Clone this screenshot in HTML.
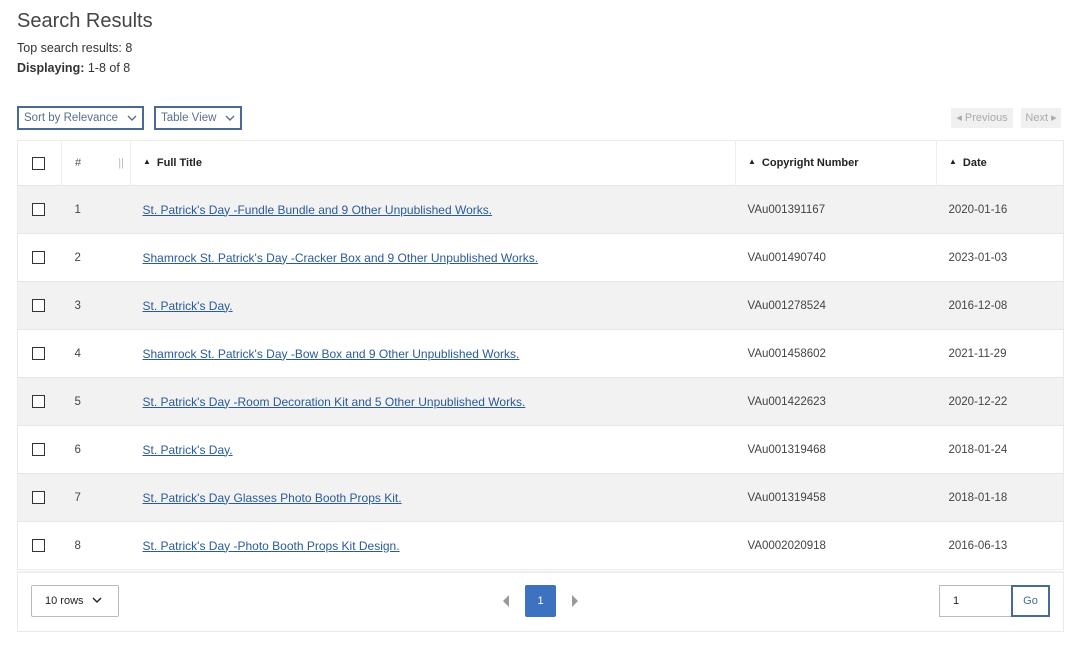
<!DOCTYPE html>
<html><head><meta charset="utf-8"><style>
*{box-sizing:border-box;margin:0;padding:0}
body{width:1080px;height:648px;background:#fff;font-family:"Liberation Sans",sans-serif;color:#333;position:relative;overflow:hidden}
.abs{position:absolute}
h1{position:absolute;left:17px;top:10px;font-size:20px;font-weight:normal;color:#444}
.sel{position:absolute;top:106px;height:24px;border:2px solid #4a6a96;font-size:11.5px;color:#5a6f8c;padding:4px 5px;}
.sel svg{position:absolute;right:5px;top:7px}
table{position:absolute;left:17px;top:140px;width:1047px;border-collapse:collapse;font-size:11.5px;border:1px solid #eaeaea}
td,th{height:48px;padding:0;vertical-align:middle;text-align:left}
th{height:45px;font-weight:bold;font-size:11px;color:#222;border-right:1px solid #eee;background:#fff}
tbody tr:nth-child(odd) td{background:#f2f2f2}
tbody tr:nth-child(even) td{background:#fff}
tbody td{border-top:1px solid #e6e6e6;color:#444}
.cb{display:inline-block;width:13px;height:13px;border:1.5px solid #333;background:#fff;margin-left:14px;vertical-align:middle}
a{color:#2a5a9a;text-decoration:underline;font-size:12px}
.tri{font-size:8px;margin-right:6px;position:relative;top:-2px}
</style></head><body>
<h1>Search Results</h1>
<div class="abs" style="left:17px;top:41px;font-size:12.5px;color:#333">Top search results: 8</div>
<div class="abs" style="left:17px;top:61px;font-size:12.5px;color:#333"><b>Displaying:</b> 1-8 of 8</div>
<div class="sel" style="left:17px;width:127px">Sort by Relevance<svg width="10" height="7"><path d="M1 1l4 4 4-4" stroke="#5a6f8c" stroke-width="1.4" fill="none"/></svg></div>
<div class="sel" style="left:154px;width:88px">Table View<svg width="10" height="7"><path d="M1 1l4 4 4-4" stroke="#5a6f8c" stroke-width="1.4" fill="none"/></svg></div>
<div class="abs" style="left:951px;top:108px;width:62px;height:20px;background:#f0f0f0;color:#aaa;font-size:11px;line-height:20px;text-align:center">◂ Previous</div>
<div class="abs" style="left:1021px;top:108px;width:40px;height:20px;background:#f0f0f0;color:#aaa;font-size:11px;line-height:20px;text-align:center">Next ▸</div>
<table>
<thead><tr>
<th style="width:44px"><span class="cb" style="margin-left:14px"></span></th>
<th style="width:69px;font-weight:normal;color:#555;padding-left:13px">#<span style="float:right;margin-right:6px;color:#bbb">||</span></th>
<th style="width:605px;padding-left:12px"><span class="tri">▲</span>Full Title</th>
<th style="width:201px;padding-left:12px"><span class="tri">▲</span>Copyright Number</th>
<th style="padding-left:12px;border-right:none"><span class="tri">▲</span>Date</th>
</tr></thead>
<tbody>
<tr><td><span class="cb"></span></td><td style="padding-left:13px">1</td><td style="padding-left:12px"><a>St. Patrick's Day -Fundle Bundle and 9 Other Unpublished Works.</a></td><td style="padding-left:12px">VAu001391167</td><td style="padding-left:12px">2020-01-16</td></tr>
<tr><td><span class="cb"></span></td><td style="padding-left:13px">2</td><td style="padding-left:12px"><a>Shamrock St. Patrick's Day -Cracker Box and 9 Other Unpublished Works.</a></td><td style="padding-left:12px">VAu001490740</td><td style="padding-left:12px">2023-01-03</td></tr>
<tr><td><span class="cb"></span></td><td style="padding-left:13px">3</td><td style="padding-left:12px"><a>St. Patrick's Day.</a></td><td style="padding-left:12px">VAu001278524</td><td style="padding-left:12px">2016-12-08</td></tr>
<tr><td><span class="cb"></span></td><td style="padding-left:13px">4</td><td style="padding-left:12px"><a>Shamrock St. Patrick's Day -Bow Box and 9 Other Unpublished Works.</a></td><td style="padding-left:12px">VAu001458602</td><td style="padding-left:12px">2021-11-29</td></tr>
<tr><td><span class="cb"></span></td><td style="padding-left:13px">5</td><td style="padding-left:12px"><a>St. Patrick's Day -Room Decoration Kit and 5 Other Unpublished Works.</a></td><td style="padding-left:12px">VAu001422623</td><td style="padding-left:12px">2020-12-22</td></tr>
<tr><td><span class="cb"></span></td><td style="padding-left:13px">6</td><td style="padding-left:12px"><a>St. Patrick's Day.</a></td><td style="padding-left:12px">VAu001319468</td><td style="padding-left:12px">2018-01-24</td></tr>
<tr><td><span class="cb"></span></td><td style="padding-left:13px">7</td><td style="padding-left:12px"><a>St. Patrick's Day Glasses Photo Booth Props Kit.</a></td><td style="padding-left:12px">VAu001319458</td><td style="padding-left:12px">2018-01-18</td></tr>
<tr><td><span class="cb"></span></td><td style="padding-left:13px">8</td><td style="padding-left:12px"><a>St. Patrick's Day -Photo Booth Props Kit Design.</a></td><td style="padding-left:12px">VA0002020918</td><td style="padding-left:12px">2016-06-13</td></tr>
</tbody></table>
<div class="abs" style="left:17px;top:571px;width:1047px;height:61px;border:1px solid #eaeaea;border-top:2px solid #eee"></div>
<div class="abs" style="left:31px;top:585px;width:88px;height:32px;border:1px solid #bbb;border-radius:2px;font-size:11px;line-height:30px;padding-left:13px;color:#222">10 rows<svg style="margin-left:8px" width="10" height="7"><path d="M1 1l4 4 4-4" stroke="#222" stroke-width="1.4" fill="none"/></svg></div>
<svg class="abs" style="left:502px;top:594px" width="8" height="14"><path d="M7 1L1 7l6 6z" fill="#999"/></svg>
<div class="abs" style="left:525px;top:585px;width:31px;height:32px;background:#3d72c0;border-radius:2px;color:#fff;font-size:11px;line-height:32px;text-align:center">1</div>
<svg class="abs" style="left:571px;top:594px" width="8" height="14"><path d="M1 1l6 6-6 6z" fill="#999"/></svg>
<div class="abs" style="left:939px;top:585px;width:73px;height:32px;border:1px solid #bbb;font-size:11px;line-height:30px;padding-left:13px;color:#222">1</div>
<div class="abs" style="left:1011px;top:585px;width:39px;height:32px;border:2px solid #4a6a96;font-size:11px;line-height:28px;text-align:center;color:#4a6a96">Go</div>
</body></html>
